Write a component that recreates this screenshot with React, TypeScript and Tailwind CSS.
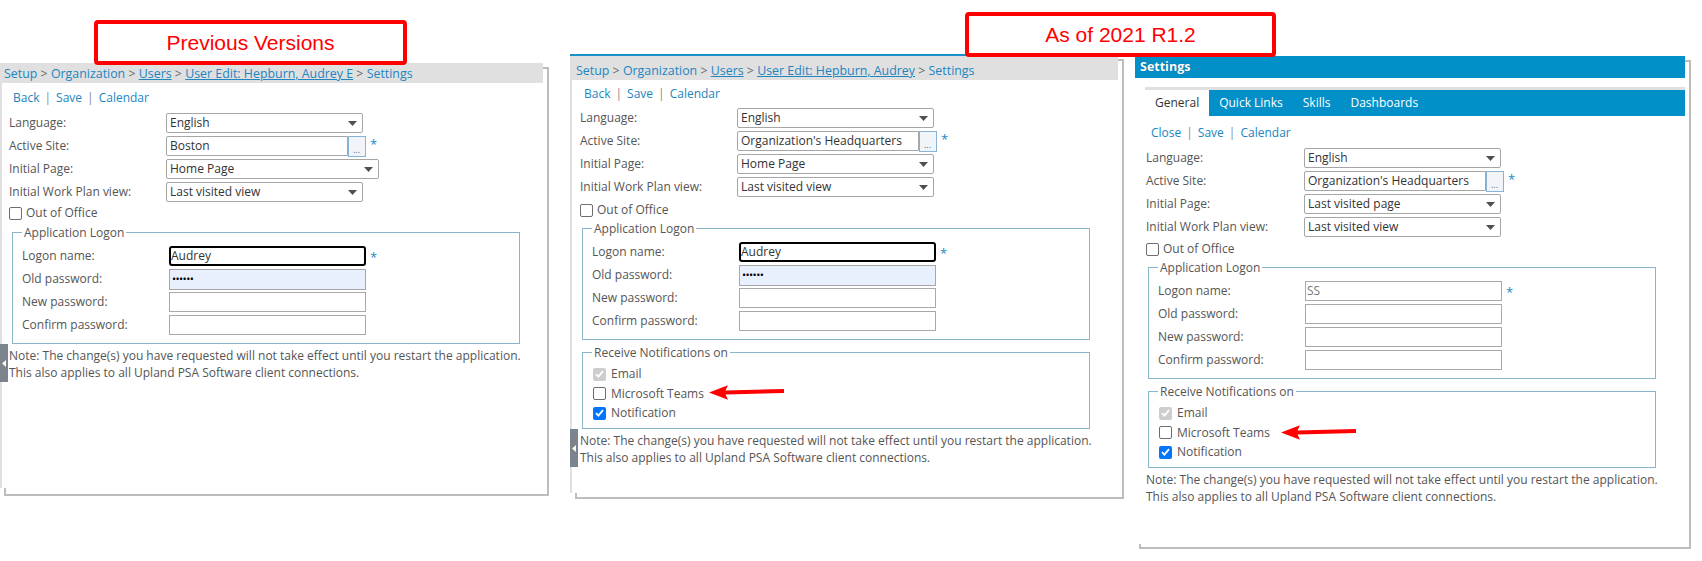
import React from "react";

type Kind = "off" | "on" | "dis";

function Box({ kind }: { kind: Kind }) {
  if (kind === "off")
    return <span className="block h-[13px] w-[13px] shrink-0 rounded-[2px] border border-[#6e6e6e] bg-white" />;
  const bg = kind === "on" ? "bg-[#0075ff]" : "bg-[#cdcdcd]";
  return (
    <span className={`flex h-[13px] w-[13px] shrink-0 items-center justify-center rounded-[2px] ${bg}`}>
      <svg width="9" height="8" viewBox="0 0 9 8">
        <path d="M1 4.2L3.4 6.6L8 1.2" stroke="white" strokeWidth="1.8" fill="none" />
      </svg>
    </span>
  );
}

function Label({ w, children }: { w: string; children: React.ReactNode }) {
  return <div className={`${w} shrink-0 leading-[20px] text-[#555]`}>{children}</div>;
}

function Select({ value, w }: { value: string; w: string }) {
  return (
    <div className={`relative h-[20px] ${w} rounded-[2px] border border-[#a6a6a6] bg-white pl-[3px] leading-[18px] text-[#333]`}>
      {value}
      <svg className="absolute right-[5px] top-[7px]" width="9" height="5" viewBox="0 0 9 5">
        <path d="M0 0H9L4.5 5Z" fill="#505050" />
      </svg>
    </div>
  );
}

function Star({ mt }: { mt: string }) {
  return <span className={`ml-[4px] ${mt} text-[13px] leading-none text-[#1a8ac6]`}>*</span>;
}

function Site({ value }: { value: string }) {
  return (
    <div className="flex items-start">
      <div className="h-[20px] w-[182px] rounded-l-[2px] border border-[#a6a6a6] bg-white pl-[3px] leading-[18px] text-[#333]">
        {value}
      </div>
      <div className="relative h-[21px] w-[18px] border border-[#86b3d6] bg-[#f1f5f9]">
        <span className="absolute bottom-[2px] left-[4px] text-[9px] leading-none text-[#4a6a85]">...</span>
      </div>
      <Star mt="mt-[2px]" />
    </div>
  );
}

function TextInput({ variant, value }: { variant: "focus" | "auto" | "plain" | "plainv"; value?: string }) {
  if (variant === "focus")
    return (
      <div className="h-[20px] w-[197px] rounded-[3px] border-2 border-black bg-white leading-[16px] text-[#333]">
        {value}
      </div>
    );
  if (variant === "auto")
    return (
      <div className="h-[21px] w-[197px] border border-[#a6a6a6] bg-[#e8f0fe] pl-[2px] text-[11px] leading-[18px] tracking-[-0.6px] text-black">
        ••••••
      </div>
    );
  return (
    <div className="h-[20px] w-[197px] border border-[#a9a9a9] bg-white pl-[1px] leading-[18px] text-[#777]">
      {value}
    </div>
  );
}

function Fieldset({ legend, className, children }: { legend: string; className: string; children: React.ReactNode }) {
  return (
    <div className={`relative w-[508px] border border-[#8ab6cb] ${className}`}>
      <span className="absolute left-[9px] top-[-9px] bg-white px-[2px] leading-[17px] text-[#555]">{legend}</span>
      {children}
    </div>
  );
}

function LinkRow({ first, className }: { first: string; className: string }) {
  return (
    <div className={`flex items-center text-[#2185c0] ${className}`}>
      <span>{first}</span>
      <span className="mx-[5px] text-[#8a8a8a]">|</span>
      <span>Save</span>
      <span className="mx-[5px] text-[#8a8a8a]">|</span>
      <span>Calendar</span>
    </div>
  );
}

function Note() {
  return (
    <div className="mt-[3px] whitespace-nowrap leading-[17px] text-[#555]">
      <div>Note: The change(s) you have requested will not take effect until you restart the application.</div>
      <div>This also applies to all Upland PSA Software client connections.</div>
    </div>
  );
}

type FormProps = {
  lw: string;
  site: string;
  page: string;
  pageW: string;
  focused: boolean;
  oooMt: string;
  fsMt: string;
  fsMl: string;
  notif: boolean;
};

function Form({ lw, site, page, pageW, focused, oooMt, fsMt, fsMl, notif }: FormProps) {
  return (
    <div className="flex flex-col">
      <div className="flex flex-col gap-[3px]">
        <div className="flex h-[20px] items-start">
          <Label w={lw}>Language:</Label>
          <Select value="English" w="w-[197px]" />
        </div>
        <div className="flex h-[20px] items-start">
          <Label w={lw}>Active Site:</Label>
          <Site value={site} />
        </div>
        <div className="flex h-[20px] items-start">
          <Label w={lw}>Initial Page:</Label>
          <Select value={page} w={pageW} />
        </div>
        <div className="flex h-[20px] items-start">
          <Label w={lw}>Initial Work Plan view:</Label>
          <Select value="Last visited view" w="w-[197px]" />
        </div>
      </div>
      <div className={`${oooMt} flex h-[18px] items-center gap-[4px] text-[#555]`}>
        <Box kind="off" />
        <span>Out of Office</span>
      </div>
      <Fieldset legend="Application Logon" className={`${fsMt} ${fsMl} pb-[8px] pl-[9px] pt-[13px]`}>
        <div className="flex flex-col gap-[3px]">
          <div className="flex h-[20px] items-start">
            <Label w="w-[147px]">Logon name:</Label>
            {focused ? <TextInput variant="focus" value="Audrey" /> : <TextInput variant="plainv" value="SS" />}
            <Star mt="mt-[5px]" />
          </div>
          <div className="flex h-[20px] items-start">
            <Label w="w-[147px]">Old password:</Label>
            {focused ? <TextInput variant="auto" /> : <TextInput variant="plain" />}
          </div>
          <div className="flex h-[20px] items-start">
            <Label w="w-[147px]">New password:</Label>
            <TextInput variant="plain" />
          </div>
          <div className="flex h-[20px] items-start">
            <Label w="w-[147px]">Confirm password:</Label>
            <TextInput variant="plain" />
          </div>
        </div>
      </Fieldset>
      {notif && (
        <Fieldset legend="Receive Notifications on" className={`mt-[12px] ${fsMl} pb-[5px] pl-[10px] pt-[11.5px]`}>
          <div className="flex h-[19.5px] items-center gap-[5px] text-[#555]">
            <Box kind="dis" />
            <span>Email</span>
          </div>
          <div className="flex h-[19.5px] items-center gap-[5px] text-[#555]">
            <Box kind="off" />
            <span>Microsoft Teams</span>
          </div>
          <div className="flex h-[19.5px] items-center gap-[5px] text-[#555]">
            <Box kind="on" />
            <span>Notification</span>
          </div>
        </Fieldset>
      )}
      <Note />
    </div>
  );
}

function SideTab({ className }: { className: string }) {
  return (
    <div className={`absolute left-0 flex h-[38px] w-[8px] items-center justify-start bg-[#7b838c] pl-[2px] ${className}`}>
      <svg width="4" height="7" viewBox="0 0 4 7">
        <path d="M4 0V7L0 3.5Z" fill="#fffbe8" />
      </svg>
    </div>
  );
}

function Arrow({ className }: { className: string }) {
  return (
    <svg className={`absolute ${className}`} width="76" height="16" viewBox="0 0 76 16">
      <path d="M0 8.5L19 1.2L16.5 6.6L75 5L75 8.9L16.5 10.4L19 15.8Z" fill="#ff0000" />
    </svg>
  );
}

function Crumb({ last }: { last: string }) {
  return (
    <>
      Setup <span className="text-[#6a6a6a]">&gt;</span> Organization <span className="text-[#6a6a6a]">&gt;</span>{" "}
      <span className="underline">Users</span> <span className="text-[#6a6a6a]">&gt;</span>{" "}
      <span className="underline">{last}</span> <span className="text-[#6a6a6a]">&gt;</span> Settings
    </>
  );
}

export default function App() {
  return (
    <div className="relative h-[561px] w-[1702px] overflow-hidden bg-white font-['Open_Sans',sans-serif] text-[12px]">
      {/* Panel 1 - previous versions */}
      <div className="absolute left-0 top-[63px]">
        <div className="absolute left-[4px] top-[4px] h-[429px] w-[545px] border-2 border-[#bdbdbd]" />
        <div className="relative flex h-[425px] w-[543px] flex-col border-l-2 border-[#e0e0e0] bg-white">
          <div className="h-[20px] whitespace-nowrap bg-[#e0e0e0] pl-[2px] pt-[2px] text-[12.4px] leading-[18px] text-[#2185c0]">
            <Crumb last="User Edit: Hepburn, Audrey E" />
          </div>
          <LinkRow first="Back" className="h-[30px] pl-[11px]" />
          <div className="pl-[7px]">
            <Form
              lw="w-[157px]"
              site="Boston"
              page="Home Page"
              pageW="w-[213px]"
              focused
              oooMt="mt-[2px]"
              fsMt="mt-[10px]"
              fsMl="ml-[3px]"
              notif={false}
            />
          </div>
        </div>
        <SideTab className="top-[281px]" />
      </div>

      {/* Panel 2 - as of 2021 R1.2 (page) */}
      <div className="absolute left-[570px] top-[54px]">
        <div className="absolute left-[5px] top-[5px] h-[440px] w-[549px] border-2 border-[#bdbdbd]" />
        <div className="relative flex h-[439px] w-[548px] flex-col bg-white">
          <div className="h-[2px] bg-[#1b8fc9]" />
          <div className="flex flex-1 flex-col border-l-2 border-[#e0e0e0]">
            <div className="h-[24px] whitespace-nowrap bg-[#e0e0e0] pl-[4px] pt-[6px] text-[12.4px] leading-[17px] text-[#2185c0]">
              <Crumb last="User Edit: Hepburn, Audrey" />
            </div>
            <LinkRow first="Back" className="h-[28px] pl-[12px]" />
            <div className="pl-[8px]">
              <Form
                lw="w-[157px]"
                site="Organization's Headquarters"
                page="Home Page"
                pageW="w-[197px]"
                focused
                oooMt="mt-[4px]"
                fsMt="mt-[9px]"
                fsMl="ml-[2px]"
                notif
              />
            </div>
          </div>
        </div>
        <SideTab className="top-[375px]" />
      </div>

      {/* Panel 3 - settings dialog */}
      <div className="absolute left-[1135px] top-[56px]">
        <div className="absolute left-[4px] top-[4px] h-[489px] w-[552px] border-2 border-[#bdbdbd]" />
        <div className="relative flex h-[488px] w-[550px] flex-col bg-white">
          <div className="h-[22px] bg-[#0390c9] pl-[5px] text-[12.5px] font-bold leading-[22px] text-white [text-shadow:0_0_1px_rgba(0,40,70,0.6)]">
            Settings
          </div>
          <div className="ml-[10px] mt-[9px] h-[3px] bg-[#e0e0e0]" />
          <div className="ml-[10px] flex h-[26px] bg-[#0390c9] leading-[26px] text-white">
            <div className="bg-white px-[10px] text-[#333]">General</div>
            <div className="px-[10px]">Quick Links</div>
            <div className="px-[10px]">Skills</div>
            <div className="px-[10px]">Dashboards</div>
          </div>
          <LinkRow first="Close" className="mt-[2px] h-[30px] pl-[16px]" />
          <div className="pl-[11px]">
            <Form
              lw="w-[158px]"
              site="Organization's Headquarters"
              page="Last visited page"
              pageW="w-[197px]"
              focused={false}
              oooMt="mt-[3px]"
              fsMt="mt-[9px]"
              fsMl="ml-[2px]"
              notif
            />
          </div>
        </div>
      </div>

      {/* Annotations */}
      <div className="absolute left-[94px] top-[20px] flex h-[45px] w-[313px] items-center justify-center rounded-[4px] border-4 border-[#ff0000] bg-white font-['Liberation_Sans',Arial,sans-serif] text-[21px] text-[#ff0000]">
        Previous Versions
      </div>
      <div className="absolute left-[965px] top-[12px] flex h-[45px] w-[311px] items-center justify-center rounded-[4px] border-4 border-[#ff0000] bg-white font-['Liberation_Sans',Arial,sans-serif] text-[21px] text-[#ff0000]">
        As of 2021 R1.2
      </div>
      <Arrow className="left-[709px] top-[384px]" />
      <Arrow className="left-[1281px] top-[424px]" />
    </div>
  );
}
